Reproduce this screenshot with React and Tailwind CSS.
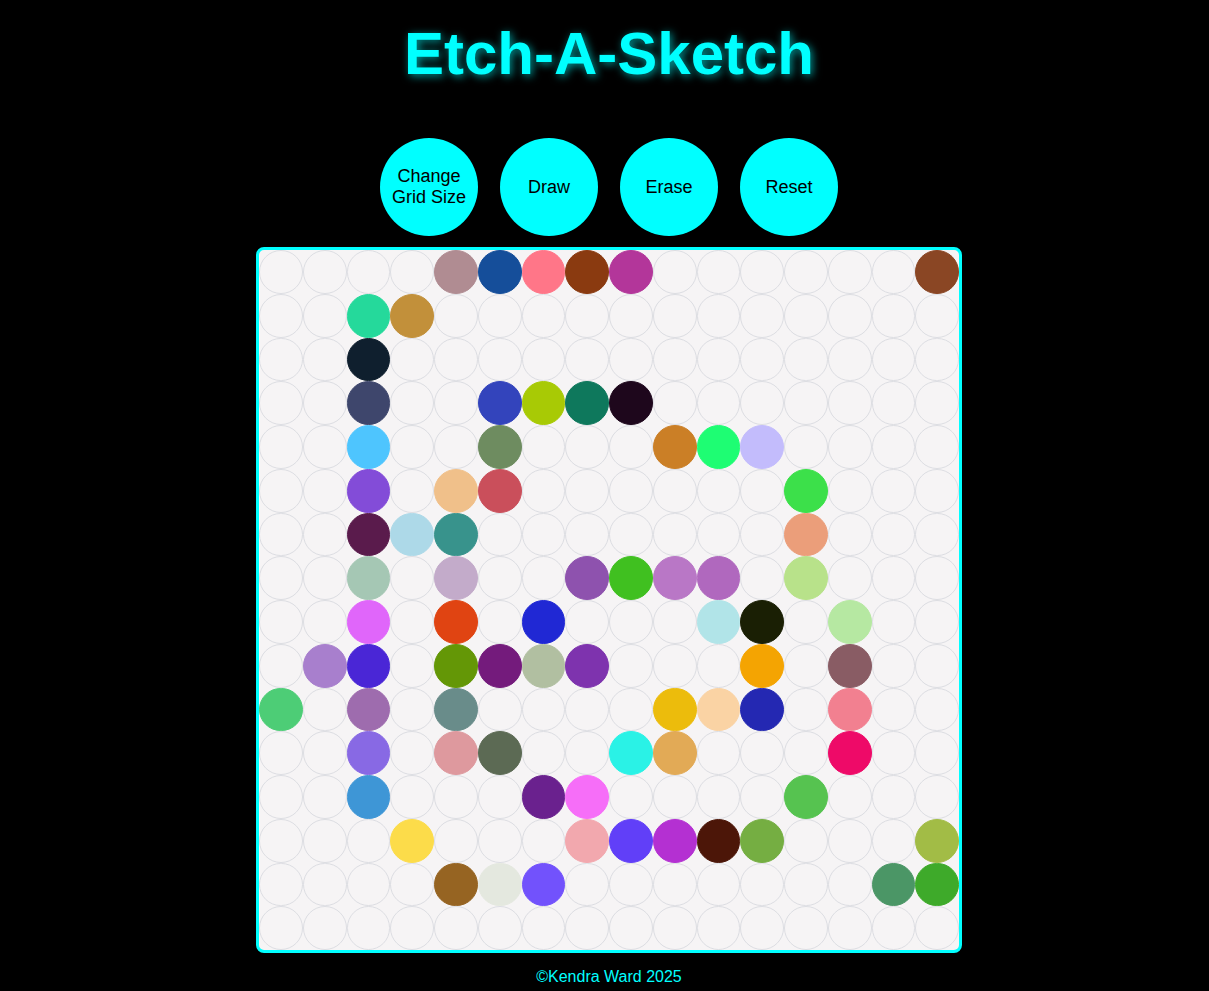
import React from 'react';

// painted cells: [row, col, color]
const painted = [
  [0, 4, '#b08c92'], [0, 5, '#154e9a'], [0, 6, '#ff7688'], [0, 7, '#8a3a10'], [0, 8, '#b3369a'], [0, 15, '#8a4624'],
  [1, 2, '#25d99b'], [1, 3, '#c2903a'],
  [2, 2, '#0f1f2e'],
  [3, 2, '#3e466c'], [3, 5, '#3344bc'], [3, 6, '#a8ca05'], [3, 7, '#0e785c'], [3, 8, '#1e071c'],
  [4, 2, '#4ec5fe'], [4, 5, '#6e8c60'], [4, 9, '#cb7f26'], [4, 10, '#1efd73'], [4, 11, '#c3bcfc'],
  [5, 2, '#834cd8'], [5, 4, '#f0c08a'], [5, 5, '#ca4f5b'], [5, 12, '#3ce04a'],
  [6, 2, '#5a1b4c'], [6, 3, '#add9e8'], [6, 4, '#38938c'], [6, 12, '#eb9e7a'],
  [7, 2, '#a5c7b4'], [7, 4, '#c3abca'], [7, 7, '#8e52ae'], [7, 8, '#40c020'], [7, 9, '#b977c6'], [7, 10, '#b068be'], [7, 12, '#b8e28a'],
  [8, 2, '#e066fa'], [8, 4, '#e04412'], [8, 6, '#2028d4'], [8, 10, '#b1e4e8'], [8, 11, '#1a1f04'], [8, 13, '#b6e8a2'],
  [9, 1, '#a87fcd'], [9, 2, '#4a26d6'], [9, 4, '#649706'], [9, 5, '#741b7c'], [9, 6, '#b1bfa1'], [9, 7, '#7e33ae'], [9, 11, '#f4a402'], [9, 13, '#895c64'],
  [10, 0, '#4dcd76'], [10, 2, '#9e6cae'], [10, 4, '#698c8a'], [10, 9, '#ecbc0c'], [10, 10, '#fad3a4'], [10, 11, '#2428b2'], [10, 13, '#f28090'],
  [11, 2, '#8869e4'], [11, 4, '#de999e'], [11, 5, '#5c6a54'], [11, 8, '#2af2e6'], [11, 9, '#e2aa56'], [11, 13, '#ee0a68'],
  [12, 2, '#3e96d6'], [12, 6, '#6a218e'], [12, 7, '#f66ef8'], [12, 12, '#56c350'],
  [13, 3, '#fcdc4a'], [13, 7, '#f2a8ae'], [13, 8, '#613ff8'], [13, 9, '#b430d2'], [13, 10, '#4c1608'], [13, 11, '#75ae42'], [13, 15, '#a2bc46'],
  [14, 4, '#966422'], [14, 5, '#e4e8df'], [14, 6, '#7252fc'], [14, 14, '#4b9666'], [14, 15, '#3eaa2a'],
];

const colorAt = {};
painted.forEach(([r, c, col]) => {
  colorAt[`${r}-${c}`] = col;
});

const buttons = ['Change Grid Size', 'Draw', 'Erase', 'Reset'];

export default function App() {
  const cells = [];
  for (let r = 0; r < 16; r++) {
    for (let c = 0; c < 16; c++) {
      const col = colorAt[`${r}-${c}`];
      cells.push(
        <div
          key={`${r}-${c}`}
          className="rounded-full border border-[#dcdde2] bg-[#f6f4f5]"
          style={col ? { backgroundColor: col, borderColor: col } : undefined}
        />
      );
    }
  }

  return (
    <div className="min-h-screen bg-black font-['Liberation_Sans',Arial,sans-serif] pl-[9px]">
      <div className="flex flex-col items-center">
        {/* Title */}
        <h1 className="pt-[22px] text-[60px] leading-[64px] font-bold text-[#00ffff] [text-shadow:2px_2px_8px_rgba(0,255,255,0.6)]">
          Etch-A-Sketch
        </h1>

        {/* Controls */}
        <div className="mt-[52px] flex gap-[22px]">
          {buttons.map((label) => (
            <button
              key={label}
              className="w-[98px] h-[98px] rounded-full bg-[#00ffff] text-black text-[18px] leading-[21px] px-2 flex items-center justify-center text-center"
            >
              {label}
            </button>
          ))}
        </div>

        {/* Sketch pad */}
        <div className="mt-[11px] border-[3px] border-[#00ffff] rounded-lg bg-[#f6f4f5] overflow-hidden">
          <div className="w-[700px] h-[700px] grid grid-cols-16 grid-rows-16">
            {cells}
          </div>
        </div>

        {/* Footer */}
        <p className="mt-[15px] text-[16px] leading-[18px] text-[#00ffff]">©Kendra Ward 2025</p>
      </div>
    </div>
  );
}
